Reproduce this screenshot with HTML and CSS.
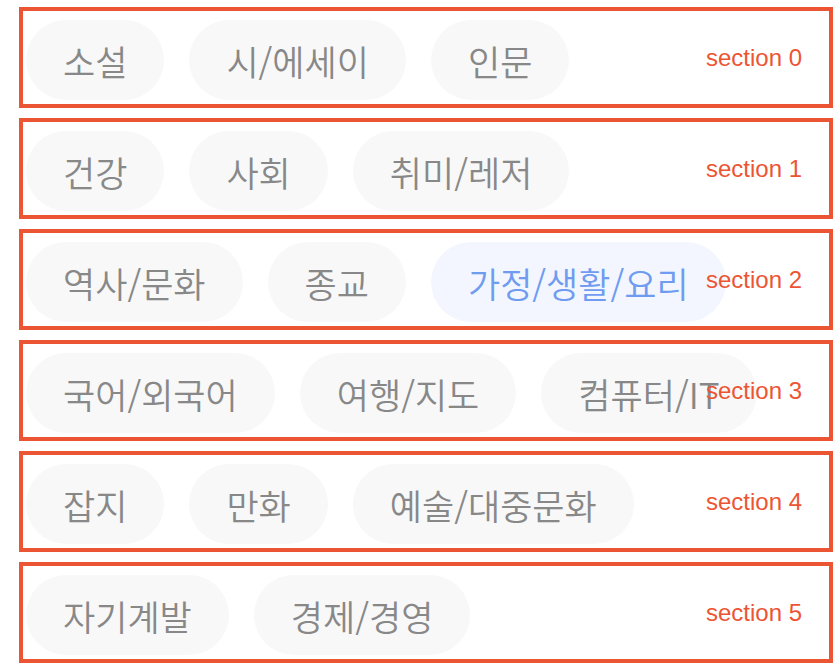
FILE: index.html
```html
<!DOCTYPE html>
<html lang="ko">
<head>
<meta charset="utf-8">
<title>Categories</title>
<link rel="stylesheet" href="styles.css">
</head>
<body>
<div class="list">
  <section class="section">
    <div class="chips">
      <span class="chip">소설</span>
      <span class="chip">시/에세이</span>
      <span class="chip">인문</span>
    </div>
    <span class="label">section 0</span>
  </section>
  <section class="section">
    <div class="chips">
      <span class="chip">건강</span>
      <span class="chip">사회</span>
      <span class="chip">취미/레저</span>
    </div>
    <span class="label">section 1</span>
  </section>
  <section class="section">
    <div class="chips">
      <span class="chip">역사/문화</span>
      <span class="chip">종교</span>
      <span class="chip chip-active">가정/생활/요리</span>
    </div>
    <span class="label">section 2</span>
  </section>
  <section class="section">
    <div class="chips">
      <span class="chip">국어/외국어</span>
      <span class="chip">여행/지도</span>
      <span class="chip">컴퓨터/IT</span>
    </div>
    <span class="label">section 3</span>
  </section>
  <section class="section">
    <div class="chips">
      <span class="chip">잡지</span>
      <span class="chip">만화</span>
      <span class="chip">예술/대중문화</span>
    </div>
    <span class="label">section 4</span>
  </section>
  <section class="section">
    <div class="chips">
      <span class="chip">자기계발</span>
      <span class="chip">경제/경영</span>
    </div>
    <span class="label">section 5</span>
  </section>
</div>
</body>
</html>
```

FILE: styles.css
```css
html, body {
  margin: 0;
  padding: 0;
  background: #ffffff;
}

body {
  font-family: "Noto Sans CJK KR", "Noto Sans", sans-serif;
}

.list {
  display: flex;
  flex-direction: column;
  gap: 10px;
  padding: 7px 0 0 19px;
  width: 814px;
}

.section {
  position: relative;
  box-sizing: border-box;
  height: 101px;
  border: 4px solid #ec5533;
  padding: 9px 3px 4px 3px;
  overflow: hidden;
}

.chips {
  display: flex;
  flex-wrap: nowrap;
  gap: 25px;
}

.chip {
  display: flex;
  align-items: center;
  justify-content: center;
  height: 80px;
  padding: 0 37px;
  border-radius: 40px;
  background: #f8f8f8;
  color: #888888;
  font-size: 35px;
  font-weight: 350;
  line-height: 1;
  white-space: nowrap;
}

.chip-active {
  background: #f3f6fe;
  color: #6f9cf0;
}

.label {
  position: absolute;
  right: 27px;
  top: 50%;
  transform: translateY(-50%);
  font-family: "Liberation Sans", Arial, sans-serif;
  font-size: 24px;
  color: #ec5533;
  line-height: 1;
}
```
